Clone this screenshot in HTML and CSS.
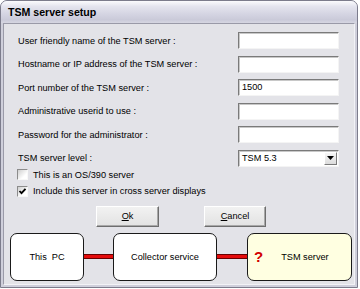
FILE: index.html
```html
<!DOCTYPE html>
<html>
<head>
<meta charset="utf-8">
<link rel="stylesheet" href="styles.css">
</head>
<body>
<div class="window">
  <div class="titlebar">TSM server setup</div>
  <div class="client">
    <div class="form">
      <div class="row"><span class="label">User friendly name of the TSM server :</span><span class="field"></span></div>
      <div class="row"><span class="label">Hostname or IP address of the TSM server :</span><span class="field"></span></div>
      <div class="row"><span class="label">Port number of the TSM server :</span><span class="field">1500</span></div>
      <div class="row"><span class="label">Administrative userid to use :</span><span class="field"></span></div>
      <div class="row"><span class="label">Password for the administrator :</span><span class="field"></span></div>
      <div class="row"><span class="label">TSM server level :</span>
        <span class="field combo"><span class="combo-text">TSM 5.3</span><span class="combo-btn"><svg width="7" height="4" viewBox="0 0 7 4"><path d="M0 0H7L3.5 4Z" fill="#000"/></svg></span></span>
      </div>
    </div>
    <div class="checks">
      <div class="check"><span class="box"></span><span>This is an OS/390 server</span></div>
      <div class="check"><span class="box"><svg width="9" height="9" viewBox="0 0 9 9"><path d="M1.5 4L3.5 6.2L7.5 1.8" fill="none" stroke="#000" stroke-width="1.8"/></svg></span><span>Include this server in cross server displays</span></div>
    </div>
    <div class="buttons">
      <div class="btn"><u>O</u>k</div>
      <div class="btn btn-cancel"><u>C</u>ancel</div>
    </div>
    <div class="chain">
      <div class="node node-pc">This&nbsp; PC</div>
      <div class="link"></div>
      <div class="node node-collector">Collector service</div>
      <div class="link link-2"></div>
      <div class="node node-server"><span class="q">?</span><span class="node-label">TSM server</span></div>
    </div>
  </div>
</div>
</body>
</html>
```

FILE: styles.css
```css
html, body {
  margin: 0;
  padding: 0;
  background: #ffffff;
}
body {
  font-family: "Liberation Sans", Arial, sans-serif;
  font-size: 9.2px;
  color: #000;
}
.window {
  box-sizing: border-box;
  width: 358px;
  height: 288px;
  border: 1px solid #7c7c8c;
  border-radius: 7px 7px 0 0;
  background: #cfcfdb;
  display: flex;
  flex-direction: column;
  padding: 0 2px 2px 2px;
}
.titlebar {
  height: 22px;
  margin: 0 -2px;
  padding-left: 7px;
  border-radius: 6px 6px 0 0;
  background: linear-gradient(#fbfbfd 0%, #e4e4ee 25%, #d4d4e2 60%, #cacad9 85%, #d6d6e2 100%);
  font-weight: bold;
  font-size: 10.6px;
  line-height: 23px;
}
.client {
  flex: 1;
  background: #e3e3e8;
  border: 1px solid #9a9aa8;
  border-right-color: #f2f2f6;
  border-bottom-color: #f2f2f6;
  display: flex;
  flex-direction: column;
}
.form {
  display: flex;
  flex-direction: column;
  gap: 6.5px;
  padding: 8px 15px 0 14px;
}
.row {
  display: flex;
  align-items: center;
  justify-content: space-between;
  height: 17px;
}
.label {
  white-space: nowrap;
}
.field {
  box-sizing: border-box;
  width: 101px;
  height: 17px;
  background: #ffffff;
  border: 1px solid;
  border-color: #7a7a7a #f4f4f4 #f4f4f4 #7a7a7a;
  box-shadow: inset 1px 1px 0 #c8c8c8;
  padding-left: 3px;
  line-height: 15px;
  display: flex;
  align-items: center;
}
.combo {
  justify-content: space-between;
  padding-right: 1px;
}
.combo-btn {
  width: 13px;
  height: 13px;
  box-sizing: border-box;
  background: linear-gradient(#f6f6f6, #dcdcdc);
  border: 1px solid;
  border-color: #ffffff #7a7a7a #7a7a7a #ffffff;
  display: flex;
  align-items: center;
  justify-content: center;
}
.checks {
  display: flex;
  flex-direction: column;
  padding-left: 13px;
  margin-top: 0;
}
.check {
  display: flex;
  align-items: center;
  gap: 5px;
  height: 16.5px;
}
.box {
  box-sizing: border-box;
  width: 11px;
  height: 11px;
  border: 1px solid;
  border-color: #8c8c8c #f8f8f8 #f8f8f8 #8c8c8c;
  background: linear-gradient(135deg, #cfcfcf, #ffffff 70%);
  display: flex;
  align-items: center;
  justify-content: center;
}
.buttons {
  display: flex;
  gap: 45px;
  padding-left: 92px;
  margin-top: 6px;
}
.btn {
  box-sizing: border-box;
  width: 63px;
  height: 21px;
  background: linear-gradient(#f2f2f2, #e2e2e2);
  border: 1px solid;
  border-color: #ffffff #6e6e6e #6e6e6e #ffffff;
  box-shadow: inset -1px -1px 0 #a8a8a8;
  display: flex;
  align-items: center;
  justify-content: center;
}
.btn-cancel {
  width: 62px;
}
.chain {
  display: flex;
  align-items: center;
  padding-left: 6px;
  margin-top: 6px;
}
.node {
  box-sizing: border-box;
  height: 48px;
  border: 1px solid #1a1a1a;
  border-radius: 7px;
  background: #ffffff;
  display: flex;
  align-items: center;
  justify-content: center;
}
.node-pc {
  width: 74px;
}
.node-collector {
  width: 104px;
}
.node-server {
  width: 105px;
  background: #ffffe1;
  justify-content: flex-start;
  padding-left: 6px;
  gap: 18px;
}
.q {
  color: #d20000;
  font-weight: bold;
  font-size: 15px;
}
.link {
  width: 29px;
  height: 3px;
  background: #e40c0c;
  border-top: 1px solid #6a0000;
  border-bottom: 1px solid #6a0000;
}
.link-2 {
  width: 30px;
}
```
